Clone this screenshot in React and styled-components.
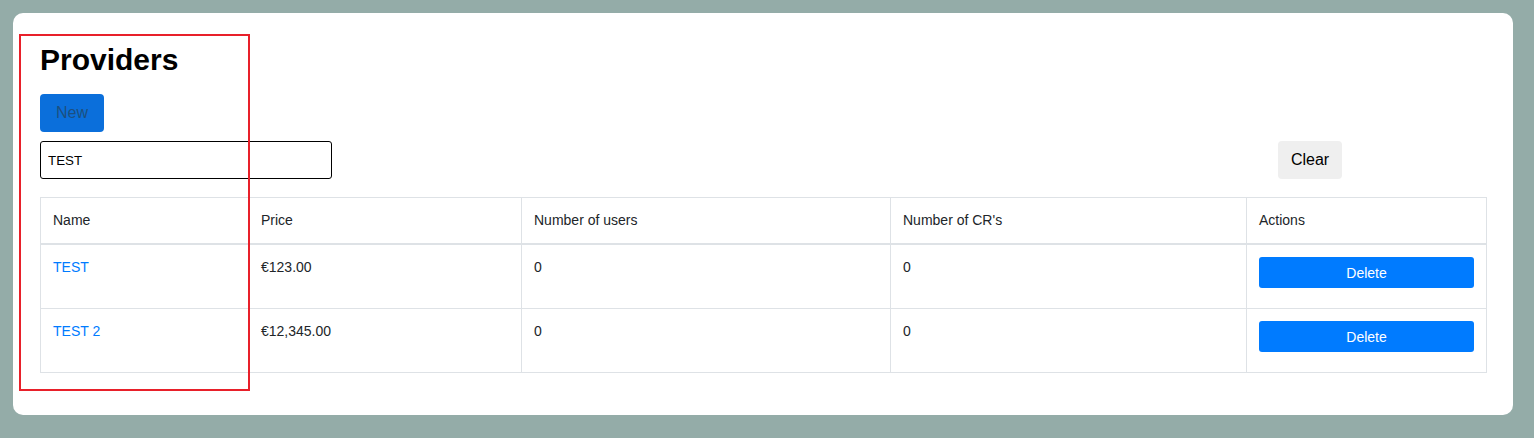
import React from "react";
import styled, { createGlobalStyle } from "styled-components";

const GlobalStyle = createGlobalStyle`
  html, body {
    margin: 0;
    padding: 0;
    background: #94aca8;
    font-family: "Liberation Sans", Arial, sans-serif;
  }
  * {
    box-sizing: border-box;
  }
`;

const Page = styled.div`
  position: relative;
  padding: 13px 21px 23px 13px;
`;

const Card = styled.div`
  background: #ffffff;
  border-radius: 10px;
  padding: 29px 27px 42px;
`;

const Title = styled.h1`
  margin: 0;
  font-size: 30px;
  line-height: 36px;
  font-weight: 700;
  color: #000000;
`;

const NewButton = styled.button`
  display: block;
  margin-top: 16px;
  width: 64px;
  height: 38px;
  border: none;
  border-radius: 4px;
  background: #0b6fdb;
  color: #1c4f80;
  font-family: inherit;
  font-size: 16px;
`;

const FilterRow = styled.div`
  display: flex;
  justify-content: space-between;
  align-items: center;
  margin-top: 9px;
  padding-right: 144px;
`;

const SearchInput = styled.input`
  width: 292px;
  height: 38px;
  border: 1px solid #000000;
  border-radius: 3px;
  padding: 0 7px;
  font-family: inherit;
  font-size: 13.33px;
  color: #000000;
  outline: none;
`;

const ClearButton = styled.button`
  width: 64px;
  height: 38px;
  border: none;
  border-radius: 4px;
  background: #efefef;
  color: #000000;
  font-family: inherit;
  font-size: 16px;
`;

const Table = styled.table`
  margin-top: 18px;
  width: 100%;
  border-collapse: collapse;
  table-layout: fixed;
  border: 1px solid #dee2e6;
  font-size: 14px;
  color: #212529;
`;

const HeadCell = styled.th`
  text-align: left;
  font-weight: 400;
  padding: 12px 12px;
  line-height: 21px;
  border: 1px solid #dee2e6;
  border-bottom-width: 2px;
`;

const Cell = styled.td`
  vertical-align: top;
  padding: 12px 12px;
  line-height: 21px;
  border: 1px solid #dee2e6;
`;

const NameLink = styled.a`
  color: #007bff;
  text-decoration: none;
`;

const DeleteButton = styled.button`
  display: block;
  width: 100%;
  height: 31px;
  margin-bottom: 8px;
  border: none;
  border-radius: 3px;
  background: #007bff;
  color: #ffffff;
  font-family: inherit;
  font-size: 14px;
`;

const Highlight = styled.div`
  position: absolute;
  left: 19px;
  top: 34px;
  width: 231px;
  height: 357px;
  border: 2px solid #e8202a;
  pointer-events: none;
`;

const providers = [
  { name: "TEST", price: "€123.00", users: 0, crs: 0 },
  { name: "TEST 2", price: "€12,345.00", users: 0, crs: 0 },
];

export default function App() {
  return (
    <>
      <GlobalStyle />
      <Page>
        <Card>
          <Title>Providers</Title>
          <NewButton type="button">New</NewButton>
          <FilterRow>
            <SearchInput defaultValue="TEST" />
            <ClearButton type="button">Clear</ClearButton>
          </FilterRow>
          <Table>
            <colgroup>
              <col style={{ width: 208 }} />
              <col style={{ width: 273 }} />
              <col style={{ width: 369 }} />
              <col style={{ width: 356 }} />
              <col style={{ width: 240 }} />
            </colgroup>
            <thead>
              <tr>
                <HeadCell>Name</HeadCell>
                <HeadCell>Price</HeadCell>
                <HeadCell>Number of users</HeadCell>
                <HeadCell>Number of CR's</HeadCell>
                <HeadCell>Actions</HeadCell>
              </tr>
            </thead>
            <tbody>
              {providers.map((p) => (
                <tr key={p.name}>
                  <Cell>
                    <NameLink href="#">{p.name}</NameLink>
                  </Cell>
                  <Cell>{p.price}</Cell>
                  <Cell>{p.users}</Cell>
                  <Cell>{p.crs}</Cell>
                  <Cell>
                    <DeleteButton type="button">Delete</DeleteButton>
                  </Cell>
                </tr>
              ))}
            </tbody>
          </Table>
        </Card>
        <Highlight />
      </Page>
    </>
  );
}
